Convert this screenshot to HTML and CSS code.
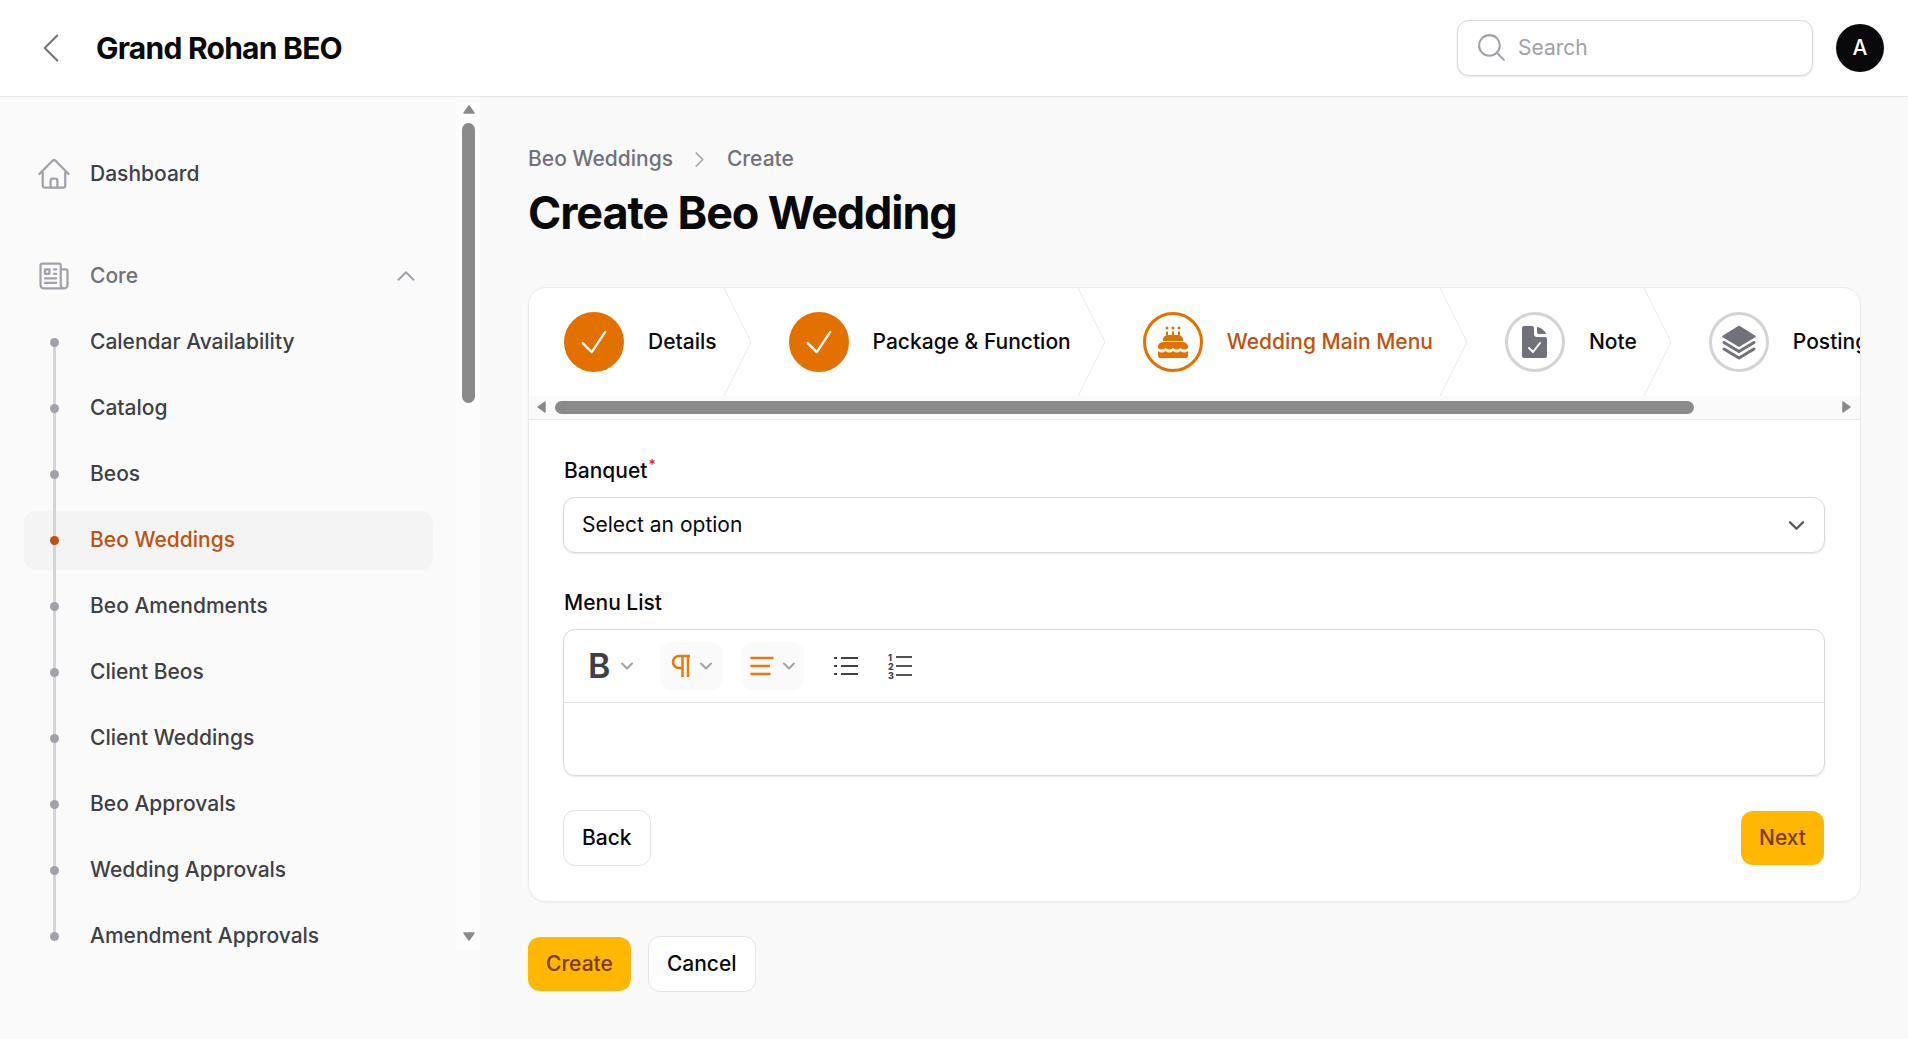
FILE: index.html
```html
<!DOCTYPE html>
<html lang="en">
<head>
    <meta charset="UTF-8">
    <meta name="viewport" content="width=device-width, initial-scale=1.0">
    <title>Create Beo Wedding</title>
    <link rel="stylesheet" href="styles.css">
</head>
<body>
    <header class="topbar">
        <svg class="back-icon" viewBox="0 0 24 24" fill="none" stroke="currentColor" stroke-width="1.2" stroke-linecap="round" stroke-linejoin="round"><path d="M15.75 19.5L8.25 12l7.5-7.5"/></svg>
        <div class="brand">Grand Rohan BEO</div>
        <div class="search">
            <svg class="search-icon" viewBox="0 0 24 24" fill="none" stroke="currentColor" stroke-width="1.5" stroke-linecap="round" stroke-linejoin="round"><path d="M21 21l-5.197-5.197m0 0A7.5 7.5 0 105.196 5.196a7.5 7.5 0 0010.607 10.607z"/></svg>
            <span>Search</span>
        </div>
        <div class="avatar">A</div>
    </header>

    <div class="layout">
        <aside class="sidebar">
            <nav class="nav">
                <a class="nav-top">
                    <svg class="nav-icon" viewBox="0 0 24 24" fill="none" stroke="currentColor" stroke-width="1.5" stroke-linecap="round" stroke-linejoin="round"><path d="M2.25 12l8.954-8.955c.44-.439 1.152-.439 1.591 0L21.75 12M4.5 9.75v10.125c0 .621.504 1.125 1.125 1.125H9.75v-4.875c0-.621.504-1.125 1.125-1.125h2.25c.621 0 1.125.504 1.125 1.125V21h4.125c.621 0 1.125-.504 1.125-1.125V9.75M8.25 21h8.25"/></svg>
                    <span>Dashboard</span>
                </a>
                <div class="nav-group">
                    <svg class="nav-icon" viewBox="0 0 24 24" fill="none" stroke="currentColor" stroke-width="1.5" stroke-linecap="round" stroke-linejoin="round"><path d="M12 7.5h1.5m-1.5 3h1.5m-7.5 3h7.5m-7.5 3h7.5m3-9h3.375c.621 0 1.125.504 1.125 1.125V18a2.25 2.25 0 01-2.25 2.25M16.5 7.5V18a2.25 2.25 0 002.25 2.25M16.5 7.5V4.875c0-.621-.504-1.125-1.125-1.125H4.125C3.504 3.75 3 4.254 3 4.875V18a2.25 2.25 0 002.25 2.25h13.5M6 7.5h3v3H6v-3z"/></svg>
                    <span class="nav-group-label">Core</span>
                    <svg class="group-chevron" viewBox="0 0 24 24" fill="none" stroke="currentColor" stroke-width="2" stroke-linecap="round" stroke-linejoin="round"><path d="M4.5 15.75l7.5-7.5 7.5 7.5"/></svg>
                </div>
                <ul class="nav-list">
                    <li><a class="nav-link"><span class="rail"><i></i></span>Calendar Availability</a></li>
                    <li><a class="nav-link"><span class="rail"><i></i></span>Catalog</a></li>
                    <li><a class="nav-link"><span class="rail"><i></i></span>Beos</a></li>
                    <li><a class="nav-link active"><span class="rail"><i></i></span>Beo Weddings</a></li>
                    <li><a class="nav-link"><span class="rail"><i></i></span>Beo Amendments</a></li>
                    <li><a class="nav-link"><span class="rail"><i></i></span>Client Beos</a></li>
                    <li><a class="nav-link"><span class="rail"><i></i></span>Client Weddings</a></li>
                    <li><a class="nav-link"><span class="rail"><i></i></span>Beo Approvals</a></li>
                    <li><a class="nav-link"><span class="rail"><i></i></span>Wedding Approvals</a></li>
                    <li><a class="nav-link"><span class="rail"><i></i></span>Amendment Approvals</a></li>
                </ul>
            </nav>
            <div class="vscroll">
                <svg class="vscroll-up" viewBox="0 0 12 9"><path d="M6 1L11 8H1z"/></svg>
                <div class="vscroll-thumb"></div>
                <svg class="vscroll-down" viewBox="0 0 12 9"><path d="M6 8L11 1H1z"/></svg>
            </div>
        </aside>

        <main class="main">
            <div class="crumbs">
                <span>Beo Weddings</span>
                <svg class="crumb-sep" viewBox="0 0 24 24" fill="none" stroke="currentColor" stroke-width="1.8" stroke-linecap="round" stroke-linejoin="round"><path d="M8.25 4.5l7.5 7.5-7.5 7.5"/></svg>
                <span>Create</span>
            </div>
            <h1 class="title">Create Beo Wedding</h1>

            <section class="card">
                <div class="steps">
                    <div class="step">
                        <span class="circle done"><svg viewBox="0 0 24 24" fill="none" stroke="#fff" stroke-width="1.5" stroke-linecap="round" stroke-linejoin="round"><path d="M4.5 12.75l6 6 9-13.5"/></svg></span>
                        <span class="step-label">Details</span>
                        <svg class="step-arrow" viewBox="0 0 27 108" fill="none"><path d="M0 0L27 54L0 108"/></svg>
                    </div>
                    <div class="step">
                        <span class="circle done"><svg viewBox="0 0 24 24" fill="none" stroke="#fff" stroke-width="1.5" stroke-linecap="round" stroke-linejoin="round"><path d="M4.5 12.75l6 6 9-13.5"/></svg></span>
                        <span class="step-label">Package &amp; Function</span>
                        <svg class="step-arrow" viewBox="0 0 27 108" fill="none"><path d="M0 0L27 54L0 108"/></svg>
                    </div>
                    <div class="step current">
                        <span class="circle">
                            <svg viewBox="0 0 36 36" fill="#e27100">
                                <circle cx="12" cy="4" r="1.5"/><circle cx="18" cy="4" r="1.5"/><circle cx="24" cy="4" r="1.5"/>
                                <rect x="11" y="7.5" width="2" height="4"/><rect x="17" y="7.5" width="2" height="4"/><rect x="23" y="7.5" width="2" height="4"/>
                                <path d="M8 17a5 5 0 0 1 5-6h10a5 5 0 0 1 5 6z"/>
                                <path d="M3 24a5 5 0 0 1 5-6h20a5 5 0 0 1 5 6c-2.500 2-5 2-7.500 0c-2.500 2-5 2-7.500 0c-2.500 2-5 2-7.500 0c-2.500 2-5 2-7.500 0z"/>
                                <path d="M3 27c2.500 2 5 2 7.500 0c2.500 2 5 2 7.500 0c2.500 2 5 2 7.500 0c2.500 2 5 2 7.500 0v5a2 2 0 0 1-2 2H5a2 2 0 0 1-2-2z"/>
                            </svg>
                        </span>
                        <span class="step-label">Wedding Main Menu</span>
                        <svg class="step-arrow" viewBox="0 0 27 108" fill="none"><path d="M0 0L27 54L0 108"/></svg>
                    </div>
                    <div class="step">
                        <span class="circle">
                            <svg viewBox="0 0 36 36" fill="#71717a">
                                <path d="M7 2h8a2 2 0 0 1 2 2v6a3 3 0 0 0 3 3h8a2 2 0 0 1 2 2v17a2 2 0 0 1-2 2H7a2 2 0 0 1-2-2V4a2 2 0 0 1 2-2z"/>
                                <path d="M20 3v5a2 2 0 0 0 2 2h7c-1-3.500-5-6.500-9-7z"/>
                                <path d="M12 24l4 4l7-9" fill="none" stroke="#fff" stroke-width="2" stroke-linecap="round" stroke-linejoin="round"/>
                            </svg>
                        </span>
                        <span class="step-label">Note</span>
                        <svg class="step-arrow" viewBox="0 0 27 108" fill="none"><path d="M0 0L27 54L0 108"/></svg>
                    </div>
                    <div class="step">
                        <span class="circle">
                            <svg viewBox="0 0 36 36" fill="#71717a">
                                <path d="M18 2.500L34 12.500L18 22L2 12.500z" stroke="#71717a" stroke-width="1.500" stroke-linejoin="round"/>
                                <path d="M3 18.500L18 27.500L33 18.500" fill="none" stroke="#71717a" stroke-width="3" stroke-linecap="round" stroke-linejoin="round"/>
                                <path d="M3 25L18 34L33 25" fill="none" stroke="#71717a" stroke-width="3" stroke-linecap="round" stroke-linejoin="round"/>
                            </svg>
                        </span>
                        <span class="step-label">Posting</span>
                    </div>
                </div>
                <div class="hscroll">
                    <svg class="hscroll-arrow" viewBox="0 0 9 12"><path d="M1 6L8 1V11z"/></svg>
                    <div class="hscroll-thumb"></div>
                    <svg class="hscroll-arrow right" viewBox="0 0 9 12"><path d="M8 6L1 1V11z"/></svg>
                </div>

                <div class="form">
                    <label class="field-label">Banquet<sup>*</sup></label>
                    <div class="select">
                        <span>Select an option</span>
                        <svg class="select-chevron" viewBox="0 0 24 24" fill="none" stroke="currentColor" stroke-width="2.6" stroke-linecap="round" stroke-linejoin="round"><path d="M19.5 8.250l-7.500 7.500-7.500-7.500"/></svg>
                    </div>

                    <label class="field-label menu-label">Menu List</label>
                    <div class="editor">
                        <div class="toolbar">
                            <div class="tool">
                                <span class="tool-bold">B</span>
                                <svg class="tool-chevron" viewBox="0 0 12 8" fill="none" stroke="currentColor" stroke-width="2" stroke-linecap="round" stroke-linejoin="round"><path d="M1 1.500l5 5 5-5"/></svg>
                            </div>
                            <div class="tool on">
                                <svg class="tool-icon" viewBox="0 0 20 24" fill="none" stroke="#e87a0c" stroke-width="2.5"><path d="M19 2H8a6 6 0 0 0 0 12h4M11.500 2v21M17 2v21"/></svg>
                                <svg class="tool-chevron" viewBox="0 0 12 8" fill="none" stroke="currentColor" stroke-width="2" stroke-linecap="round" stroke-linejoin="round"><path d="M1 1.500l5 5 5-5"/></svg>
                            </div>
                            <div class="tool on">
                                <svg class="tool-icon wide" viewBox="0 0 24 20" fill="none" stroke="#e87a0c" stroke-width="2.5"><path d="M0.500 2H23.500M0.500 10H20M0.500 18H20.500"/></svg>
                                <svg class="tool-chevron" viewBox="0 0 12 8" fill="none" stroke="currentColor" stroke-width="2" stroke-linecap="round" stroke-linejoin="round"><path d="M1 1.500l5 5 5-5"/></svg>
                            </div>
                            <svg class="list-icon" viewBox="0 0 24 20" fill="none" stroke="#3f3f46" stroke-width="2.200"><path d="M7 2H24M7 10H24M7 18H24"/><path d="M0 2H3M0 10H3M0 18H3"/></svg>
                            <svg class="list-icon olist" viewBox="0 0 24 26" fill="none" stroke="#52525b" stroke-width="2.200">
                                <path d="M8 4H24M8 13H24M8 22H24"/>
                                <text x="0" y="7.500" class="olist-num">1</text>
                                <text x="0" y="16.500" class="olist-num">2</text>
                                <text x="0" y="25.500" class="olist-num">3</text>
                            </svg>
                        </div>
                        <div class="editor-body"></div>
                    </div>

                    <div class="form-actions">
                        <button class="btn">Back</button>
                        <button class="btn primary">Next</button>
                    </div>
                </div>
            </section>

            <div class="page-actions">
                <button class="btn primary">Create</button>
                <button class="btn">Cancel</button>
            </div>
        </main>
    </div>
</body>
</html>
```

FILE: styles.css
```css
* {
    box-sizing: border-box;
}
body {
    font-family: "Inter", "Liberation Sans", sans-serif;
    font-size: 21px;
    line-height: 30px;
    color: #09090b;
    background: #f9f9f9;
    margin: 0;
    height: 100vh;
    overflow: hidden;
}

/* top bar */
.topbar {
    height: 97px;
    background: #fff;
    border-bottom: 1px solid #e6e6e8;
    box-shadow: 0 1px 2px rgba(0, 0, 0, 0.03);
    display: flex;
    align-items: center;
    padding: 0 24px 1px 31px;
}
.back-icon {
    width: 40px;
    height: 40px;
    color: #71717a;
}
.brand {
    font-size: 30px;
    line-height: 40px;
    font-weight: 700;
    letter-spacing: -0.025em;
    margin-left: 25px;
}
.search {
    margin-left: auto;
    width: 356px;
    height: 56px;
    display: flex;
    align-items: center;
    gap: 10px;
    padding-left: 17px;
    background: #fff;
    border: 1px solid #d9d9dc;
    border-radius: 12px;
    box-shadow: 0 1px 2px rgba(0, 0, 0, 0.1);
    color: #a1a1aa;
}
.search-icon {
    width: 33px;
    height: 33px;
}
.avatar {
    width: 48px;
    height: 48px;
    margin-left: 23px;
    border-radius: 50%;
    background: #09090b;
    color: #fff;
    font-weight: 500;
    display: flex;
    align-items: center;
    justify-content: center;
}

.layout {
    display: flex;
}

/* sidebar */
.sidebar {
    width: 480px;
    height: 942px;
    flex-shrink: 0;
    display: flex;
    align-items: flex-start;
    background: #fafafa;
}
.nav {
    width: 456px;
    height: 853px;
    padding: 44px 23px 0 24px;
    overflow: hidden;
    font-weight: 500;
    color: #3f3f46;
}
.nav-top,
.nav-group {
    height: 66px;
    display: flex;
    align-items: center;
    gap: 18px;
    padding-left: 12px;
}
.nav-top {
    margin-bottom: 36px;
}
.nav-icon {
    width: 36px;
    height: 36px;
    color: #a1a1aa;
}
.nav-group-label {
    color: #71717a;
}
.group-chevron {
    width: 24px;
    height: 24px;
    margin-left: auto;
    margin-right: 15px;
    color: #a1a1aa;
}
.nav-list {
    list-style: none;
    margin: 0;
    padding: 0;
}
.nav-list li {
    height: 66px;
    padding: 3.5px 0;
}
.nav-link {
    height: 59px;
    display: flex;
    align-items: center;
    padding-left: 29px;
    border-radius: 12px;
}
.nav-link.active {
    background: #f4f4f5;
    color: #c2510c;
}
.rail {
    width: 3px;
    align-self: stretch;
    margin: -3.5px 34px -3.5px 0;
    background: #d4d4d8;
    display: flex;
    align-items: center;
    justify-content: center;
}
.rail i {
    width: 9px;
    height: 9px;
    flex-shrink: 0;
    border-radius: 50%;
    background: #a1a1aa;
}
.active .rail i {
    background: #c2510c;
}
.nav-list li:first-child .rail {
    background: linear-gradient(to bottom, transparent 50%, #d4d4d8 50%);
}
.nav-list li:last-child .rail {
    background: linear-gradient(to bottom, #d4d4d8 50%, transparent 50%);
}

/* fake scrollbars, drawn like the native ones in the shot */
.vscroll {
    width: 24px;
    height: 853px;
    background: #fcfcfc;
    display: flex;
    flex-direction: column;
    align-items: center;
    padding: 8px 0 9px;
}
.vscroll-up,
.vscroll-down {
    width: 12px;
    height: 9px;
    margin-left: 2px;
    fill: #8a8a8a;
    stroke: #8a8a8a;
    stroke-width: 1.5;
    stroke-linejoin: round;
}
.vscroll-thumb {
    width: 13px;
    height: 280px;
    margin-top: 9px;
    border-radius: 7px;
    background: #8a8a8a;
}
.vscroll-down {
    margin-top: auto;
}

/* main column */
.main {
    flex: 1;
    min-width: 0;
    padding: 47px 47px 0 48px;
}
.crumbs {
    display: flex;
    align-items: center;
    color: #71717a;
    font-weight: 500;
}
.crumb-sep {
    width: 21px;
    height: 21px;
    margin: 0 16.5px;
    color: #a1a1aa;
}
.title {
    margin: 12px 0 47px;
    font-size: 45px;
    line-height: 54px;
    font-weight: 700;
    letter-spacing: -0.025em;
    color: #09090b;
}
.card {
    background: #fff;
    border: 1px solid #ececee;
    border-radius: 18px;
    box-shadow: 0 1px 2px rgba(0, 0, 0, 0.04);
    overflow: hidden;
}
.steps {
    height: 108px;
    display: flex;
    overflow: hidden;
    padding: 0 0 1px 35px;
    gap: 38px;
}
.step {
    display: flex;
    align-items: center;
    flex-shrink: 0;
    font-weight: 500;
}
.circle {
    width: 60px;
    height: 60px;
    border-radius: 50%;
    border: 3px solid #d4d4d8;
    display: flex;
    align-items: center;
    justify-content: center;
}
.circle svg {
    width: 36px;
    height: 36px;
}
.circle.done {
    background: #e27100;
    border-color: #e27100;
}
.current .circle {
    border-color: #e27100;
}
.current .step-label {
    color: #c2510c;
}
.step-label {
    margin-left: 24px;
}
.step-arrow {
    width: 27px;
    height: 108px;
    margin-left: 7px;
}
.step-arrow path {
    stroke: #e8e8ea;
    stroke-width: 1;
}
.hscroll {
    height: 24px;
    background: #fafafa;
    border-bottom: 1px solid #e6e6e8;
    display: flex;
    align-items: center;
    padding: 0 9px 1px 8px;
}
.hscroll-arrow {
    width: 9px;
    height: 12px;
    fill: #8a8a8a;
    stroke: #8a8a8a;
    stroke-width: 1.5;
    stroke-linejoin: round;
}
.hscroll-arrow.right {
    margin-left: auto;
}
.hscroll-thumb {
    width: 1139px;
    height: 13px;
    margin-left: 9px;
    border-radius: 7px;
    background: #8a8a8a;
}
.form {
    padding: 36px 35px 35px 34px;
}
.field-label {
    display: block;
    font-weight: 500;
    padding-left: 1px;
    margin-bottom: 11px;
}
.field-label sup {
    color: #dc2626;
    font-size: 14px;
    line-height: 0;
    margin-left: 1px;
}
.menu-label {
    margin-top: 35px;
    margin-bottom: 11px;
}
.select {
    height: 56px;
    display: flex;
    align-items: center;
    justify-content: space-between;
    padding: 0 17px 0 18px;
    border: 1px solid #d9d9dc;
    border-radius: 12px;
    box-shadow: 0 1px 2px rgba(0, 0, 0, 0.1);
}
.select-chevron {
    width: 21px;
    height: 21px;
    color: #52525b;
}
.editor {
    height: 147px;
    border: 1px solid #d9d9dc;
    border-radius: 12px;
    box-shadow: 0 1px 2px rgba(0, 0, 0, 0.1);
}
.toolbar {
    height: 73px;
    border-bottom: 1px solid #e4e4e7;
    display: flex;
    align-items: center;
    padding-left: 17px;
}
.tool {
    height: 48px;
    width: 63px;
    display: flex;
    align-items: center;
    justify-content: center;
    gap: 9px;
    border-radius: 12px;
    margin-right: 18px;
    color: #a1a1aa;
}
.tool:first-child {
    width: 52px;
    justify-content: flex-start;
    gap: 11px;
    margin-right: 27px;
    padding-left: 7px;
}
.tool.on {
    background: #fafafa;
}
.tool-bold {
    font-size: 34px;
    font-weight: 600;
    color: #3f3f46;
}
.tool-chevron {
    width: 12px;
    height: 8px;
    flex-shrink: 0;
}
.tool-icon {
    width: 20px;
    height: 24px;
}
.tool-icon.wide {
    width: 24px;
    height: 20px;
}
.list-icon {
    width: 24px;
    height: 20px;
    margin: 0 30px 0 12px;
}
.list-icon.olist {
    height: 26px;
    margin: 0;
}
.olist-num {
    font-size: 9px;
    font-weight: 800;
    fill: #3f3f46;
    stroke: none;
}
.form-actions {
    display: flex;
    align-items: center;
    justify-content: space-between;
    margin-top: 34px;
    padding-right: 1px;
}
.btn {
    font: inherit;
    font-weight: 500;
    height: 56px;
    padding: 0 18px;
    color: #09090b;
    background: #fff;
    border: 1px solid #e4e4e7;
    border-radius: 12px;
}
.btn.primary {
    height: 54px;
    border: none;
    background: #ffb700;
    color: #7c3a05;
}
.page-actions {
    display: flex;
    align-items: center;
    gap: 17px;
    margin-top: 34px;
}
```
